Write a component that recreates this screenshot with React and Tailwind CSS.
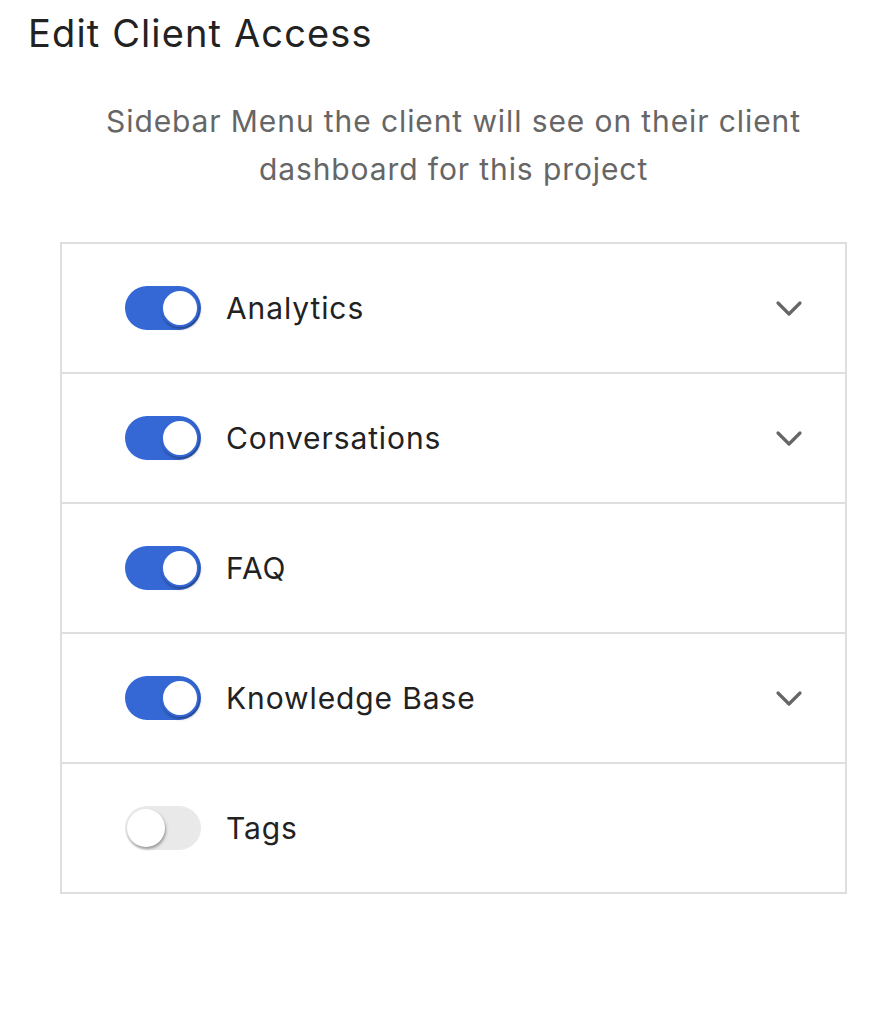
const items = [
  { label: 'Analytics', on: true, expandable: true },
  { label: 'Conversations', on: true, expandable: true },
  { label: 'FAQ', on: true, expandable: false },
  { label: 'Knowledge Base', on: true, expandable: true },
  { label: 'Tags', on: false, expandable: false },
]

function Toggle({ on }) {
  return (
    <div
      className={`relative h-[44px] w-[76px] shrink-0 rounded-full ${on ? 'bg-[#3568d4]' : 'bg-[#e9e9e9]'}`}
    >
      <div
        className={`absolute top-[3px] h-[38px] w-[38px] rounded-full bg-white shadow-[1px_2px_3px_rgba(0,0,0,0.35)] ${on ? 'left-[36px] border-2 border-[#3568d4]' : 'left-[2px]'}`}
      />
    </div>
  )
}

function Chevron() {
  return (
    <svg width="28" height="17" viewBox="0 0 28 17" className="text-[#666]">
      <polyline points="3,3 14,14 25,3" fill="none" stroke="currentColor" strokeWidth="3.2" strokeLinecap="round" strokeLinejoin="round" />
    </svg>
  )
}

export default function App() {
  return (
    <div className="min-h-[1022px] bg-white pl-[28px] pt-[11px] font-['Inter',sans-serif] text-[#222]">
      <h1 className="text-[38px] leading-[44px] font-normal tracking-[0.03em]">Edit Client Access</h1>
      <div className="ml-[32px] w-[787px]">
        <p className="mx-auto mt-[42px] w-[740px] text-center text-[30px] leading-[48px] tracking-[0.03em] text-[#666]">
          Sidebar Menu the client will see on their client dashboard for this project
        </p>
        <ul className="mt-[49px] border-2 border-[#dedede]">
          {items.map((item, i) => (
            <li
              key={item.label}
              className={`box-content flex h-[128px] items-center pl-[63px] pr-[42px] ${i > 0 ? 'border-t-2 border-[#dedede]' : ''}`}
            >
              <Toggle on={item.on} />
              <span className="ml-[25px] flex-1 text-[30px] tracking-[0.03em]">{item.label}</span>
              {item.expandable && <Chevron />}
            </li>
          ))}
        </ul>
      </div>
    </div>
  )
}
